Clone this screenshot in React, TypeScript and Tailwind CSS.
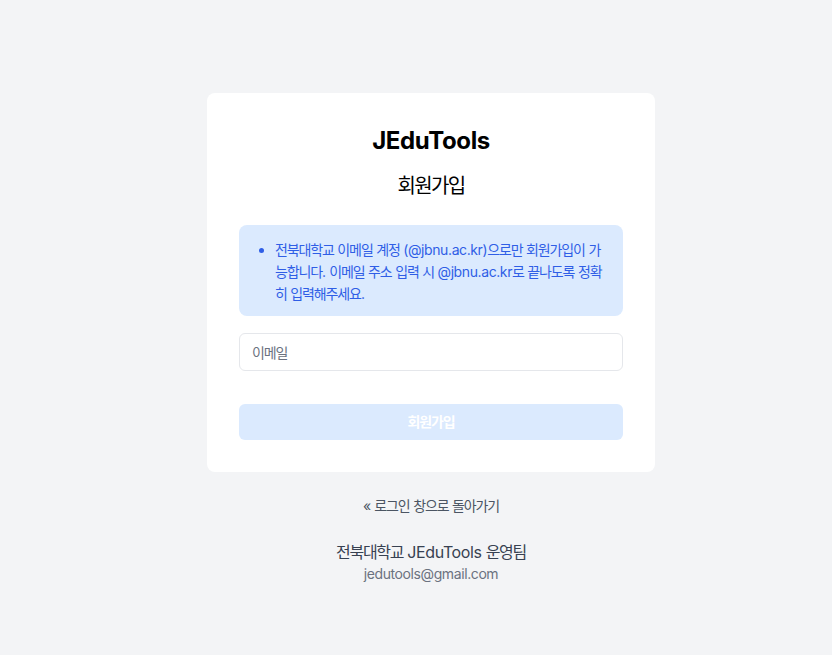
import { Fragment } from 'react';

// Hangul runs get tighter tracking so the CJK face comes closer to the narrower original
function K({ children }: { children: string }) {
  const parts = children.split(/([가-힣]+)/);
  return (
    <>
      {parts.map((p, i) =>
        /[가-힣]/.test(p) ? (
          <span key={i} className="tracking-[-0.08em]">
            {p}
          </span>
        ) : (
          <Fragment key={i}>{p}</Fragment>
        ),
      )}
    </>
  );
}

export default function App() {
  return (
    <div
      className="min-h-screen bg-[#f3f4f6] flex flex-col items-center pt-[93px] pb-10 pl-[30px] tracking-[-0.025em]"
      style={{ fontFamily: 'Inter, "Noto Sans CJK KR", sans-serif' }}
    >
      {/* Card */}
      <div className="w-[448px] bg-white rounded-lg px-8 pt-8 pb-8">
        <h1 className="text-2xl leading-8 font-bold text-black text-center tracking-[-0.015em]">JEduTools</h1>
        <h2 className="mt-[15px] text-xl leading-7 text-black text-center">
          <K>회원가입</K>
        </h2>

        <div className="mt-[25px] bg-[#dbeafe] rounded-lg pl-4 pr-[14px] pt-[14px] pb-[11px]">
          <ul className="list-disc pl-5 text-sm leading-[22px] text-[#2f5ee6]">
            <li>
              <K>
                {'전북대학교 이메일 계정 (@jbnu.ac.kr)으로만 회원가입이 가능합니다. 이메일 주소 입력 시 @jbnu.ac.kr로 끝나도록 정확히 입력해주세요.'}
              </K>
            </li>
          </ul>
        </div>

        <input
          type="email"
          placeholder="이메일"
          className="mt-[17px] w-full h-[38px] px-3 text-sm border border-[#e5e7eb] rounded-md outline-none placeholder:text-[#6b7280] tracking-[-0.08em]"
        />

        <button
          type="button"
          disabled
          className="mt-[33px] w-full h-9 rounded-md bg-[#dbeafe] text-white text-sm font-semibold"
        >
          <K>회원가입</K>
        </button>
      </div>

      <a className="mt-6 text-sm leading-5 text-[#4b5563]">
        <K>« 로그인 창으로 돌아가기</K>
      </a>

      <div className="mt-6 text-center">
        <p className="text-base leading-6 text-[#374151]">
          <K>전북대학교 JEduTools 운영팀</K>
        </p>
        <p className="text-sm leading-5 text-[#6b7280]">jedutools@gmail.com</p>
      </div>
    </div>
  );
}
